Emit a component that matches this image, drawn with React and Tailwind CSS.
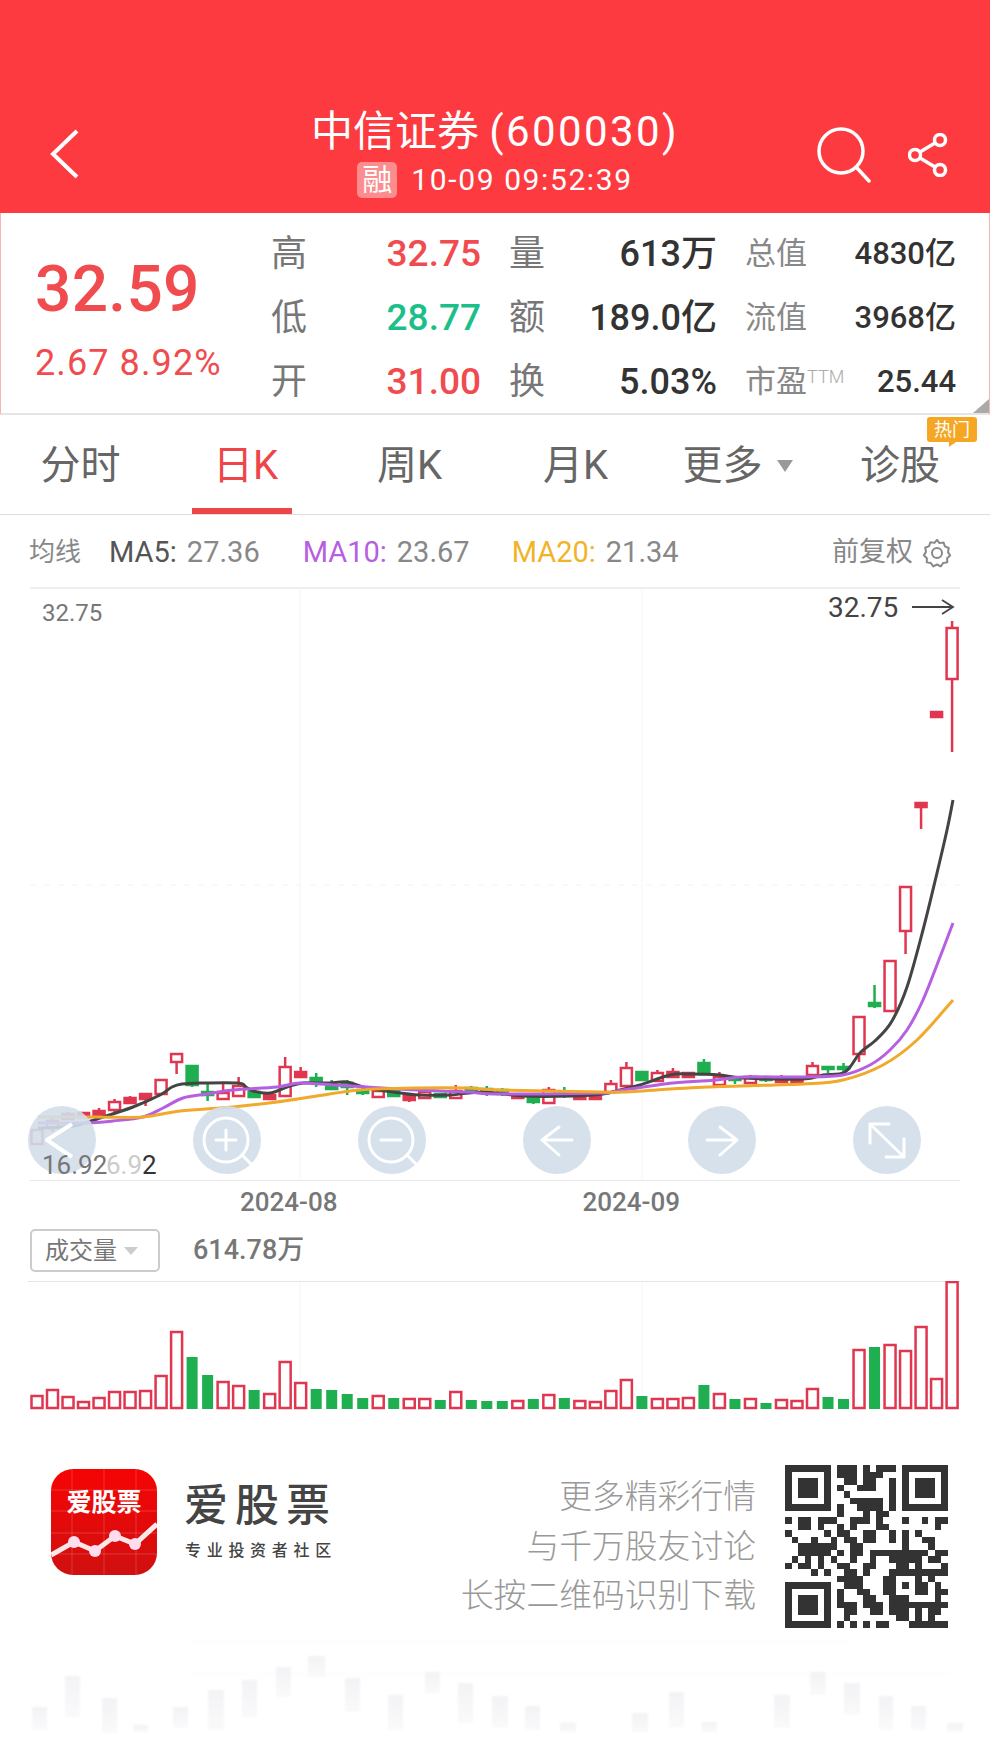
import React from 'react';

// Daily candles: body top, body bottom, wick top, wick bottom, colour
const candles = [
  [1130, 1144, 1130, 1144, 'r'], [1121, 1128, 1116, 1132, 'r'], [1114, 1119, 1112, 1120, 'r'], [1113, 1117, 1113, 1118, 'r'],
  [1111, 1116, 1108, 1118, 'r'], [1102, 1110, 1099, 1112, 'r'], [1098, 1103, 1096, 1104, 'r'], [1094, 1099, 1094, 1106, 'r'],
  [1080, 1094, 1080, 1095, 'r'], [1054, 1062, 1054, 1074, 'r'], [1066, 1085, 1065, 1087, 'g'], [1092, 1095, 1083, 1101, 'g'],
  [1093, 1099, 1083, 1099, 'r'], [1086, 1096, 1077, 1096, 'r'], [1092, 1097, 1092, 1097, 'g'], [1095, 1099, 1095, 1100, 'r'],
  [1067, 1096, 1057, 1096, 'r'], [1072, 1077, 1067, 1077, 'r'], [1078, 1083, 1073, 1087, 'g'], [1086, 1089, 1080, 1090, 'g'],
  [1083, 1087, 1080, 1095, 'g'], [1090, 1093, 1088, 1095, 'g'], [1091, 1097, 1091, 1098, 'r'], [1091, 1096, 1091, 1096, 'g'],
  [1096, 1100, 1096, 1102, 'r'], [1092, 1098, 1092, 1098, 'r'], [1094, 1097, 1094, 1098, 'g'], [1091, 1098, 1085, 1098, 'r'],
  [1088, 1091, 1086, 1092, 'g'], [1089, 1092, 1086, 1096, 'g'], [1090, 1094, 1088, 1096, 'g'], [1095, 1098, 1094, 1099, 'r'],
  [1096, 1102, 1094, 1104, 'g'], [1090, 1103, 1087, 1103, 'r'], [1092, 1094, 1087, 1098, 'g'], [1094, 1099, 1094, 1100, 'r'],
  [1094, 1099, 1094, 1099, 'r'], [1084, 1092, 1080, 1092, 'r'], [1068, 1086, 1062, 1086, 'r'], [1072, 1080, 1072, 1080, 'g'],
  [1073, 1081, 1070, 1081, 'r'], [1072, 1077, 1068, 1077, 'r'], [1073, 1077, 1073, 1078, 'r'], [1063, 1074, 1059, 1074, 'g'],
  [1077, 1085, 1072, 1085, 'r'], [1078, 1080, 1076, 1084, 'g'], [1077, 1083, 1075, 1083, 'r'], [1078, 1080, 1076, 1082, 'g'],
  [1078, 1082, 1075, 1082, 'r'], [1080, 1083, 1078, 1083, 'r'], [1066, 1075, 1062, 1075, 'r'], [1067, 1069, 1067, 1073, 'g'],
  [1067, 1069, 1063, 1073, 'g'], [1017, 1054, 1017, 1062, 'r'], [1003, 1006, 985, 1008, 'g'], [961, 1011, 961, 1011, 'r'],
  [887, 931, 887, 954, 'r'], [803, 807, 803, 829, 'r'], [712, 717, 712, 717, 'r'], [628, 679, 621, 752, 'r'],
];

// Volume bar heights, with the falling days marked
const volumes = [
  [13, 'r'], [19, 'r'], [12, 'r'], [7, 'r'], [11, 'r'], [17, 'r'], [17, 'r'], [18, 'r'], [33, 'r'], [77, 'r'],
  [52, 'g'], [34, 'g'], [27, 'r'], [23, 'r'], [19, 'g'], [15, 'r'], [47, 'r'], [26, 'r'], [20, 'g'], [19, 'g'],
  [15, 'g'], [11, 'g'], [13, 'r'], [11, 'g'], [10, 'r'], [10, 'r'], [9, 'g'], [17, 'r'], [9, 'g'], [8, 'g'],
  [8, 'g'], [8, 'r'], [10, 'g'], [14, 'r'], [11, 'g'], [8, 'r'], [7, 'r'], [18, 'r'], [29, 'r'], [13, 'g'],
  [10, 'r'], [10, 'r'], [11, 'r'], [24, 'g'], [15, 'r'], [10, 'g'], [10, 'r'], [6, 'g'], [9, 'r'], [8, 'r'],
  [20, 'r'], [12, 'g'], [10, 'g'], [59, 'r'], [62, 'g'], [64, 'r'], [58, 'r'], [82, 'r'], [30, 'r'], [127, 'r'],
];

const ma5 = '38,1128 73,1126 100,1118 133,1107 160,1095 172,1087 182,1084 200,1083 238,1083 246,1087 253,1091 270,1093 287,1087 303,1083 327,1083 347,1082 363,1087 393,1092 420,1095 450,1095 483,1092 523,1096 573,1096 603,1094 620,1090 640,1085 670,1075 690,1074 720,1075 743,1078 803,1079 823,1075 845,1072 860,1053 877,1039 892,1021 907,987 923,930 937,873 947,830 953,800';
const ma10 = '38,1123 87,1123 113,1121 143,1117 163,1108 183,1098 207,1094 233,1090 277,1087 300,1083 333,1085 367,1087 417,1090 467,1092 500,1094 600,1093 617,1091 673,1083 717,1080 743,1077 803,1077 843,1075 870,1065 890,1050 907,1030 923,1000 940,957 953,923';
const ma20 = '38,1117 97,1117 143,1117 180,1111 233,1107 277,1102 317,1096 360,1090 417,1088 467,1088 500,1090 600,1092 623,1092 707,1087 803,1084 843,1080 883,1065 917,1040 953,1000';

// QR modules outside the finder squares: row -> [from, to) column runs
const qrRuns = [
  [[8, 11], [12, 13], [14, 17]], [[8, 11], [12, 15]], [[9, 11], [12, 14], [16, 17]], [[8, 9], [11, 14], [16, 17]],
  [[9, 10], [16, 17]], [[10, 15], [16, 17]], [[8, 9], [11, 15], [16, 17]], [[8, 9], [12, 13], [14, 16]],
  [[0, 1], [2, 4], [5, 8], [10, 13], [14, 15], [18, 19], [21, 22], [23, 25]],
  [[2, 4], [5, 6], [8, 9], [10, 11], [14, 16], [23, 24]],
  [[0, 1], [6, 7], [8, 10], [12, 14], [16, 17], [18, 19], [20, 21]],
  [[1, 2], [4, 5], [7, 8], [9, 11], [12, 14], [16, 17], [18, 19], [21, 23]],
  [[2, 8], [10, 12], [18, 19], [22, 23]],
  [[2, 7], [8, 9], [10, 12], [13, 22], [23, 25]],
  [[1, 2], [3, 4], [5, 6], [7, 8], [10, 11], [13, 14], [16, 21], [22, 24]],
  [[0, 1], [2, 4], [5, 6], [8, 10], [12, 14], [17, 19], [20, 21], [24, 25]],
  [[4, 5], [6, 7], [9, 11], [12, 13], [16, 25]],
  [[8, 12], [15, 17], [20, 21], [22, 23]],
  [[9, 12], [15, 17], [18, 19], [20, 22], [23, 24]],
  [[8, 9], [11, 13], [15, 17], [20, 22], [23, 25]],
  [[8, 9], [12, 14], [16, 19], [23, 24]],
  [[8, 11], [12, 15], [16, 25]],
  [[9, 11], [13, 15], [16, 19], [20, 21], [22, 24]],
  [[9, 10], [17, 19], [20, 21], [22, 23]],
  [[8, 9], [10, 11], [12, 13], [14, 16], [19, 25]],
];

const watermark = [
  [32, 1707, 15, 23], [65, 1676, 15, 41], [102, 1698, 15, 35], [133, 1725, 15, 7], [173, 1707, 15, 21], [208, 1690, 16, 40],
  [242, 1680, 15, 37], [276, 1667, 15, 30], [308, 1656, 17, 21], [345, 1678, 15, 34], [388, 1695, 15, 35], [425, 1672, 15, 21],
  [458, 1683, 15, 40], [492, 1696, 16, 32], [525, 1706, 15, 24], [560, 1723, 16, 9], [632, 1713, 16, 19], [669, 1692, 15, 36],
  [702, 1722, 15, 10], [774, 1695, 16, 33], [810, 1672, 16, 23], [844, 1683, 16, 32], [879, 1696, 14, 34], [911, 1706, 15, 24],
  [947, 1723, 16, 9],
];

const barX = (i) => 37 + 15.51 * i;
const RED = '#e0364f';
const GREEN = '#1fae50';

// Turn "x,y x,y" into a smooth curve through the points
const smooth = (points) => {
  const p = points.split(' ').map((s) => s.split(',').map(Number));
  let d = `M${p[0][0]} ${p[0][1]}`;
  for (let i = 0; i < p.length - 1; i++) {
    const a = p[i - 1] || p[i];
    const b = p[i];
    const c = p[i + 1];
    const e = p[i + 2] || c;
    d += `C${b[0] + (c[0] - a[0]) / 6} ${b[1] + (c[1] - a[1]) / 6} ${c[0] - (e[0] - b[0]) / 6} ${c[1] - (e[1] - b[1]) / 6} ${c[0]} ${c[1]}`;
  }
  return d;
};

const Stat = ({ label, value, labelClass, valueClass }) => (
  <div className="flex h-[64px] items-center justify-between">
    <span className={labelClass}>{label}</span>
    <span className={valueClass}>{value}</span>
  </div>
);

const Finder = ({ x, y }) => (
  <g>
    <path d={`M${x} ${y}h7v7h-7zM${x + 1} ${y + 1}v5h5v-5z`} fillRule="evenodd" />
    <rect x={x + 2} y={y + 2} width="3" height="3" />
  </g>
);

const RoundButton = ({ children }) => (
  <div className="flex h-[68px] w-[68px] items-center justify-center rounded-full bg-[#d1deea]/90">
    <svg width="68" height="68" viewBox="-34 -34 68 68" fill="none" stroke="#fff" strokeWidth="3" strokeLinecap="round" strokeLinejoin="round">
      {children}
    </svg>
  </div>
);

export default function App() {
  const labelBig = 'text-[36px] leading-none text-[#777]';
  const red = 'text-[37px] font-medium leading-none text-[#f04c4f]';
  const dark = 'text-[36px] font-medium leading-none text-[#333]';
  const smallLabel = 'text-[31px] leading-none text-[#888]';
  const smallDark = 'text-[31px] font-medium leading-none text-[#333]';
  const tab = 'flex items-center justify-center pt-[2px]';

  return (
    <div className="relative flex h-[1738px] w-[990px] flex-col overflow-hidden bg-white font-[Roboto,'Noto_Sans_CJK_SC',sans-serif]">
      {/* Red title bar */}
      <header className="grid h-[213px] shrink-0 grid-cols-[1fr_auto_1fr] items-end bg-[#fc3a40] px-[50px] pb-[15px] text-white">
        <svg width="30" height="50" viewBox="0 0 30 50" fill="none" stroke="#fff" strokeWidth="4" className="mb-[19px]">
          <polyline points="27,2 3,25 27,48" />
        </svg>
        <div className="flex flex-col items-center">
          <div className="whitespace-nowrap text-[42px] leading-[52px]">
            中信证券 <span className="tracking-[2.400px]">(600030)</span>
          </div>
          <div className="mt-[4px] flex items-center gap-[14px]">
            <span className="flex h-[36px] w-[40px] items-center justify-center rounded-[5px] bg-[#fb8d8f] text-[30px] leading-none">融</span>
            <span className="text-[30px] leading-[36px] tracking-[1.600px]">10-09 09:52:39</span>
          </div>
        </div>
        <div className="mb-[15px] mr-[-8px] flex items-center justify-end gap-[36px]">
          <svg width="56" height="56" viewBox="0 0 56 56" fill="none" stroke="#fff" strokeWidth="3.500" strokeLinecap="round">
            <circle cx="25" cy="24" r="22" />
            <line x1="41" y1="41" x2="53" y2="54" />
          </svg>
          <svg width="40" height="44" viewBox="0 0 40 44" fill="none" stroke="#fff" strokeWidth="3.500">
            <circle cx="32" cy="7" r="5.500" />
            <circle cx="7" cy="22" r="5.500" />
            <circle cx="32" cy="37" r="5.500" />
            <line x1="27" y1="10" x2="12" y2="19" />
            <line x1="12" y1="25" x2="27" y2="34" />
          </svg>
        </div>
      </header>

      {/* Quote panel */}
      <section className="relative flex h-[202px] shrink-0 items-center border-x border-b-2 border-x-[#f5b5b5] border-b-[#e5e5e5] pl-[34px] pt-[9px]">
        <div className="flex w-[236px] shrink-0 flex-col text-[#f04c4f]">
          <span className="text-[64px] font-medium leading-[78px] tracking-[0.300px]">32.59</span>
          <span className="mt-[12px] text-[36px] leading-[44px] tracking-[1.100px]">2.67 8.92%</span>
        </div>
        <div className="grid grid-cols-[210px_208px_211px] gap-x-[28px]">
          <div className="flex flex-col">
            <Stat label="高" value="32.75" labelClass={labelBig} valueClass={red} />
            <Stat label="低" value="28.77" labelClass={labelBig} valueClass="text-[37px] font-medium leading-none text-[#1cbf8a]" />
            <Stat label="开" value="31.00" labelClass={labelBig} valueClass={red} />
          </div>
          <div className="flex flex-col">
            <Stat label="量" value="613万" labelClass={labelBig} valueClass={dark} />
            <Stat label="额" value="189.0亿" labelClass={labelBig} valueClass={dark} />
            <Stat label="换" value="5.03%" labelClass={labelBig} valueClass={dark} />
          </div>
          <div className="flex flex-col">
            <Stat label="总值" value="4830亿" labelClass={smallLabel} valueClass={smallDark} />
            <Stat label="流值" value="3968亿" labelClass={smallLabel} valueClass={smallDark} />
            <Stat
              label={<>市盈<sup className="text-[18px] font-light text-[#aaa]">TTM</sup></>}
              value="25.44"
              labelClass={smallLabel}
              valueClass={smallDark}
            />
          </div>
        </div>
        <div className="absolute bottom-0 right-0 h-0 w-0 border-b-[14px] border-l-[16px] border-b-[#aaa] border-l-transparent" />
      </section>

      {/* Period tabs */}
      <nav className="relative grid h-[100px] shrink-0 grid-cols-6 border-b border-[#ddd] text-[40px] text-[#666]">
        <div className={`${tab} pr-[4px]`}>分时</div>
        <div className={`${tab} relative pr-[4px] text-[#ee4548]`}>
          日K
          <div className="absolute bottom-0 left-[27px] h-[6px] w-[100px] bg-[#ee4548]" />
        </div>
        <div className={`${tab} pr-[6px]`}>周K</div>
        <div className={`${tab} pr-[4px]`}>月K</div>
        <div className={`${tab} gap-[14px] pr-[10px]`}>
          更多
          <span className="h-0 w-0 border-x-[8px] border-t-[12px] border-x-transparent border-t-[#999]" />
        </div>
        <div className={`${tab} pr-[15px]`}>诊股</div>
        <div className="absolute right-[13px] top-[2px] flex h-[25px] w-[50px] items-center justify-center rounded-[3px] bg-[#f5a623] text-[18px] leading-none text-white">
          热门
          <span className="absolute bottom-[-5px] left-[22px] h-0 w-0 border-r-[7px] border-t-[5px] border-r-transparent border-t-[#f5a623]" />
        </div>
      </nav>

      {/* Moving averages legend */}
      <div className="flex h-[72px] shrink-0 items-center pl-[29px] pr-[38px] pt-[3px] text-[29px] text-[#888]">
        <span className="mr-[28px] text-[26px]">均线</span>
        <span className="text-[#555]">MA5:</span>
        <span className="ml-[10px]">27.36</span>
        <span className="ml-[43px] text-[#b65fe0]">MA10:</span>
        <span className="ml-[10px]">23.67</span>
        <span className="ml-[42px] text-[#f0b429]">MA20:</span>
        <span className="ml-[10px]">21.34</span>
        <span className="ml-auto text-[27px]">前复权</span>
        <svg width="30" height="30" viewBox="0 0 24 24" fill="none" stroke="#888" strokeWidth="1.600" className="ml-[9px]">
          <path d="M12 1.5l2 2.6 3.3-.5 1 3.1 3.1 1.3-.6 3.3 1.7 2.7-2.4 2.2.1 3.3-3.3.5-1.9 2.7-3-1.5-3 1.5-1.900-2.700-3.300-.5.1-3.300L1.500 13.800l1.700-2.700-.6-3.300 3.100-1.300 1-3.100 3.300.5z" strokeLinejoin="round" />
          <circle cx="12" cy="12" r="4" />
        </svg>
      </div>

      {/* Candle chart */}
      <section className="relative h-[594px] shrink-0">
        <svg width="990" height="594" viewBox="0 587 990 594" className="block">
          <line x1="30" y1="588" x2="960" y2="588" stroke="#eee" strokeWidth="2" />
          <line x1="30" y1="885" x2="960" y2="885" stroke="#f4f4f4" strokeDasharray="6 8" />
          <line x1="30" y1="1180.500" x2="960" y2="1180.500" stroke="#e8e8e8" />
          <line x1="300" y1="588" x2="300" y2="1180" stroke="#f5f5f5" />
          <line x1="642" y1="588" x2="642" y2="1180" stroke="#f5f5f5" />
          {candles.map(([top, bottom, wickTop, wickBottom, c], i) => {
            const color = c === 'r' ? RED : GREEN;
            const solid = c === 'g' || bottom - top < 6;
            const x = barX(i);
            return (
              <g key={i}>
                <line x1={x} y1={wickTop} x2={x} y2={wickBottom} stroke={color} strokeWidth="2.500" />
                <rect
                  x={x - 5.5}
                  y={top}
                  width="11"
                  height={bottom - top}
                  fill={solid ? color : '#fff'}
                  stroke={color}
                  strokeWidth="2.500"
                />
              </g>
            );
          })}
          <path d={smooth(ma5)} fill="none" stroke="#444" strokeWidth="3" />
          <path d={smooth(ma10)} fill="none" stroke="#b65fe0" strokeWidth="3" />
          <path d={smooth(ma20)} fill="none" stroke="#f0a92b" strokeWidth="3" />
          <path d="M912 607h40M942 600l11 7-11 7" fill="none" stroke="#444" strokeWidth="1.800" />
        </svg>
        <span className="absolute left-[42px] top-[12px] text-[24px] leading-[28px] text-[#777]">32.75</span>
        <span className="absolute left-[828px] top-[4px] text-[28px] leading-[34px] text-[#444]">32.75</span>
        <div className="absolute left-[28px] top-[519px] flex gap-[97px]">
          <RoundButton>
            <polyline points="10,-16 -15,0 10,17" strokeWidth="4" strokeLinecap="butt" />
          </RoundButton>
          <RoundButton>
            <circle cx="-1" cy="0" r="22" />
            <path d="M15 15l10 10M-11 0h20M-1 -10v20" />
          </RoundButton>
          <RoundButton>
            <circle cx="-1" cy="0" r="22" />
            <path d="M15 15l10 10M-11 0h20" />
          </RoundButton>
          <RoundButton>
            <path d="M-15 0h30M2 -13l-17 13 17 15" />
          </RoundButton>
          <RoundButton>
            <path d="M-15 0h30M-2 -13l17 13 -17 15" />
          </RoundButton>
          <RoundButton>
            <path d="M-17 -16h19M-17 -16v19M-17 -16l34 33M17 -1v18M17 17h-18" />
          </RoundButton>
        </div>
        <span className="absolute left-[42px] top-[563px] text-[26px] leading-[30px] text-[#777]">16.92</span>
        <span className="absolute left-[106px] top-[563px] text-[26px] leading-[30px] text-[#ccc]">
          6.9<span className="text-[#333]">2</span>
        </span>
      </section>

      {/* Month axis */}
      <div className="flex h-[48px] shrink-0 items-center pb-[6px] pl-[240px] text-[26px] font-medium text-[#777]">
        <span>2024-08</span>
        <span className="ml-[245px]">2024-09</span>
      </div>

      {/* Volume selector */}
      <div className="flex h-[52px] shrink-0 items-start pl-[30px]">
        <div className="flex h-[43px] w-[130px] items-center gap-[7px] rounded-[5px] border-2 border-[#ccc] pl-[13px] text-[24px] text-[#777]">
          成交量
          <span className="h-0 w-0 border-x-[7px] border-t-[8px] border-x-transparent border-t-[#ccc]" />
        </div>
        <span className="ml-[33px] text-[27px] font-medium leading-[42px] text-[#777]">614.78万</span>
      </div>

      {/* Volume chart */}
      <svg width="990" height="129" viewBox="0 1281 990 129" className="block shrink-0">
        <line x1="28" y1="1281.500" x2="960" y2="1281.500" stroke="#e5e5e5" />
        <line x1="300" y1="1282" x2="300" y2="1408" stroke="#f5f5f5" />
        <line x1="642" y1="1282" x2="642" y2="1408" stroke="#f5f5f5" />
        {volumes.map(([h, c], i) => (
          c === 'r' ? (
            <rect key={i} x={barX(i) - 5.5} y={1409 - h} width="11" height={h - 1} fill="#fff" stroke={RED} strokeWidth="2.500" />
          ) : (
            <rect key={i} x={barX(i) - 5.5} y={1409 - h} width="11" height={h} fill={GREEN} />
          )
        ))}
      </svg>

      {/* App promo */}
      <section className="flex h-[230px] shrink-0 items-start pl-[51px] pt-[59px]">
        <svg width="106" height="106" viewBox="0 0 106 106" className="shrink-0">
          <defs>
            <linearGradient id="logoBg" x1="0" y1="0" x2="0" y2="1">
              <stop offset="0" stopColor="#f60404" />
              <stop offset="1" stopColor="#d01010" />
            </linearGradient>
            <clipPath id="logoClip">
              <rect width="106" height="106" rx="22" />
            </clipPath>
          </defs>
          <g clipPath="url(#logoClip)">
            <rect width="106" height="106" fill="url(#logoBg)" />
            <path d="M0 21h106M0 42h106M0 64h106M0 85h106M21 0v106M53 0v106M85 0v106" stroke="#fff" strokeOpacity="0.18" />
            <polyline points="0,86 23,73 44,82 64,67 84,75 106,55" fill="none" stroke="#fff" strokeOpacity="0.9" strokeWidth="5" />
            <circle cx="23" cy="73" r="6" fill="#fde" />
            <circle cx="44" cy="82" r="6" fill="#fde" />
            <circle cx="64" cy="67" r="6" fill="#fde" />
            <circle cx="84" cy="75" r="6" fill="#fde" />
            <text x="53" y="42" textAnchor="middle" fill="#fff" fontSize="25" fontWeight="700" fontFamily="Noto Sans CJK SC">爱股票</text>
          </g>
        </svg>
        <div className="ml-[27px] flex flex-col text-[#444]">
          <span className="mt-[11px] whitespace-nowrap text-[44px] font-medium leading-[52px] tracking-[7px]">爱股票</span>
          <span className="mt-[8px] ml-[1px] whitespace-nowrap text-[16px] font-medium leading-[22px] tracking-[5.700px]">专业投资者社区</span>
        </div>
        <div className="ml-auto mt-[4px] flex w-[424px] flex-col items-end text-[32.800px] font-light leading-[49.500px] text-[#999]">
          <span>更多精彩行情</span>
          <span>与千万股友讨论</span>
          <span>长按二维码识别下载</span>
        </div>
        <svg width="163" height="165" viewBox="0 0 25 25" fill="#333" shapeRendering="crispEdges" className="ml-[29px] mr-[42px] mt-[-5px] shrink-0">
          <Finder x={0} y={0} />
          <Finder x={18} y={0} />
          <Finder x={0} y={18} />
          {qrRuns.map((runs, r) => runs.map(([a, b]) => (
            <rect key={`${r}-${a}`} x={a} y={r} width={b - a} height="1" />
          )))}
        </svg>
      </section>

      {/* Faded chart watermark */}
      <svg width="990" height="98" viewBox="0 1640 990 98" className="block shrink-0 blur-[1px]">
        <defs>
          <linearGradient id="fade" x1="0" y1="0" x2="0" y2="1">
            <stop offset="0" stopColor="#f3f3f6" />
            <stop offset="1" stopColor="#fafafb" />
          </linearGradient>
        </defs>
        <line x1="190" y1="1641" x2="850" y2="1641" stroke="#f8f8f8" />
        <line x1="190" y1="1674" x2="950" y2="1674" stroke="#f9f9f9" />
        {watermark.map(([x, y, w, h], i) => (
          <rect key={i} x={x} y={y} width={w} height={h} fill="url(#fade)" />
        ))}
      </svg>
    </div>
  );
}
